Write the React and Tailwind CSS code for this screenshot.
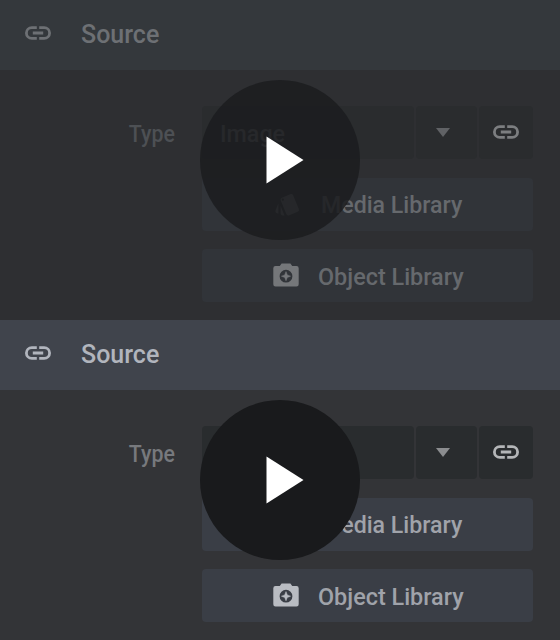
import { MdStyle } from "react-icons/md";

const themes = {
  dim: {
    header: "bg-[#34383c]",
    headerInk: "text-[#6d7074]",
    body: "bg-[#2e2f32]",
    label: "text-[#4d5054]",
    field: "bg-[#2a2c2e]",
    value: "text-[#6a6d71]",
    caret: "text-[#606265]",
    link: "text-[#7c7e80]",
    button: "bg-[#313439]",
    buttonInk: "text-[#66696d]",
    photo: "text-[#75777a]",
    disc: "bg-[#1b1c1e]/85",
  },
  lit: {
    header: "bg-[#40444c]",
    headerInk: "text-[#b1b5bd]",
    body: "bg-[#333437]",
    label: "text-[#77797d]",
    field: "bg-[#292c2e]",
    value: "text-[#8b8d90]",
    caret: "text-[#8b8d8f]",
    link: "text-[#b4b6b8]",
    button: "bg-[#3a3e46]",
    buttonInk: "text-[#a0a3aa]",
    photo: "text-[#b9bcc2]",
    disc: "bg-[#191a1c]",
  },
};

function ChainLink({ className }) {
  return (
    <svg viewBox="0 0 26 14" className={className} fill="none" stroke="currentColor" strokeWidth="2.8">
      <path d="M11.8 1.6H6.8a5.4 5.4 0 0 0 0 10.8h5M14.2 1.6h5a5.4 5.4 0 0 1 0 10.8h-5M7.8 7h10.4" />
    </svg>
  );
}

function CameraPlus({ className }) {
  return (
    <svg viewBox="0 0 26 24" className={className} fill="currentColor">
      <path
        fillRule="evenodd"
        d="M8.6 0.5h8.8l1.8 2.6h4.3a2.2 2.2 0 0 1 2.2 2.2v16a2.2 2.2 0 0 1-2.2 2.2h-21a2.2 2.2 0 0 1-2.2-2.2v-16a2.2 2.2 0 0 1 2.2-2.2h4.3zM13 6.8a6.4 6.4 0 1 0 0 12.8a6.4 6.4 0 0 0 0-12.8z"
      />
      <path d="M13 8.6l1.3 3.3 3.3 1.3-3.3 1.3-1.3 3.3-1.3-3.3-3.3-1.3 3.3-1.3z" stroke="currentColor" strokeWidth="0.5" />
    </svg>
  );
}

function Panel({ theme, showValue }) {
  const t = themes[theme];
  return (
    <section className={`relative h-80 overflow-hidden ${t.body}`}>
      <header className={`flex h-[70px] items-center ${t.header} ${t.headerInk}`}>
        <ChainLink className="mb-[4px] ml-[25px] h-[14px] w-[26px]" />
        <h2 className="ml-[30px] text-[25px] leading-[30px] font-medium">Source</h2>
      </header>
      <div className="flex pt-[36px]">
        <div className={`flex h-[53px] w-[175px] items-center justify-end pt-[2px] text-[24px] font-medium ${t.label}`}>
          <span className="origin-right scale-x-[0.89]">Type</span>
        </div>
        <div className="ml-[27px] flex w-[331px] flex-col gap-[18.5px]">
          <div className="flex h-[53px] gap-[2px]">
            <div className={`flex w-[212px] items-center rounded-[4px] pt-[2px] pl-[18px] text-[24px] font-medium ${t.field} ${t.value}`}>
              {showValue && <span className="origin-left scale-x-[0.97]">Image</span>}
            </div>
            <div className={`flex w-[61px] items-center justify-center rounded-[4px] ${t.field} ${t.caret}`}>
              <svg viewBox="0 0 14 9" className="mr-[7px] h-[9px] w-[14px]" fill="currentColor">
                <path d="M0 0h14L7 9z" />
              </svg>
            </div>
            <div className={`flex w-[54px] items-center justify-center rounded-[4px] ${t.field} ${t.link}`}>
              <ChainLink className="mb-[2px] h-[14px] w-[26px]" />
            </div>
          </div>
          <div className={`flex h-[53px] items-center rounded-[4px] pl-[72px] ${t.button} ${t.buttonInk}`}>
            <MdStyle className="size-[27px]" />
            <span className="ml-[20px] origin-left scale-x-[0.965] pt-[2px] text-[24px] font-medium whitespace-nowrap">Media Library</span>
          </div>
          <div className={`flex h-[53px] items-center rounded-[4px] pl-[71px] ${t.button} ${t.buttonInk}`}>
            <CameraPlus className={`mb-[2px] h-[24px] w-[26px] ${t.photo}`} />
            <span className="ml-[19px] origin-left scale-x-[0.975] pt-[3px] text-[24px] font-medium whitespace-nowrap">Object Library</span>
          </div>
        </div>
      </div>
      <button aria-label="Play" className={`absolute top-20 left-[200px] size-40 rounded-full ${t.disc}`}>
        <svg viewBox="0 0 160 160" className="size-40 fill-white">
          <path d="M66.5 56.5v47L103.5 80z" />
        </svg>
      </button>
    </section>
  );
}

export default function App() {
  return (
    <main className="w-[560px] font-['Roboto',sans-serif]">
      <Panel theme="dim" showValue />
      <Panel theme="lit" />
    </main>
  );
}
